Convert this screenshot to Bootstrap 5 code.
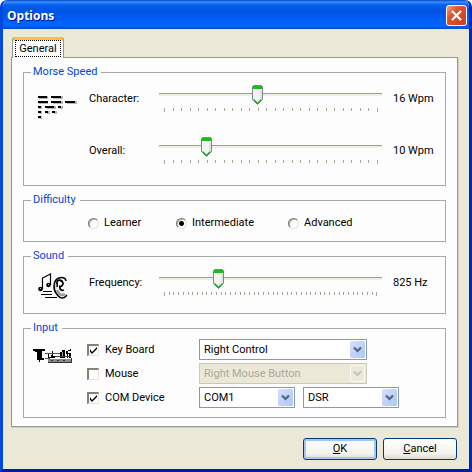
<!DOCTYPE html>
<html lang="en">
<head>
<meta charset="utf-8">
<meta name="viewport" content="width=device-width, initial-scale=1">
<title>Options</title>
<link href="https://cdn.jsdelivr.net/npm/bootstrap@5.3.0/dist/css/bootstrap.min.css" rel="stylesheet">
<style>
  body { background: #fff; color: #000; font: 11px/16px Roboto, "Liberation Sans", sans-serif; }
  .win { background: #ebe8d7; border: solid; border-width: 0 3px 3px; border-color: #0040dc #0028c0 #001ca8 #0048e0; border-radius: 7px 7px 0 0; overflow: hidden; }
  .titlebar { height: 29px; margin: 0 -3px; padding: 2px 5px 0 7px; background: linear-gradient(#0848c8, #3890ff 7%, #0862f0 16%, #0054e3 35%, #005cf4 65%, #0067ff 88%, #0048cc); }
  .titlebar h1 { font: bold 12px/20px "Open Sans", sans-serif; color: #fff; text-shadow: 1px 1px #00138c; }
  .closer { width: 21px; height: 21px; border: 1px solid #fff; border-radius: 3px; background: linear-gradient(135deg, #f0a088, #e25330 35%, #c8401c); }
  .tabs { padding: 8px 8px 0 9px; height: 28px; }
  .tab-general { width: 52px; height: 21px; margin-bottom: -1px; padding: 2px 2px 1px; z-index: 1; border: solid #919b9c; border-width: 0 1px; border-radius: 3px 3px 0 0; background: #fff; box-shadow: inset 0 3px #ffbe3c, inset 0 1px #e5972d; }
  .tab-general span { display: block; height: 17px; line-height: 15px; border: 1px dotted #000; }
  .pane { gap: 7px; margin: 0 11px 0 8px; padding: 7px 11px 8px; border: 1px solid #919b9c; background: #fdfdfd; box-shadow: 1px 1px #d0cebf; }
  .group { border: 1px solid #a8a8a8; }
  .group legend { margin: 0 0 0 7px; padding: 0 4px 0 2px; font-size: 11px; line-height: 14px; color: #0046d5; }
  .group svg { flex: none; }
  .pic { width: 65px; flex: none; padding: 8px 0 0 14px; }
  .speed { padding: 6px 0 21px; }
  .speed .rows { gap: 25px; }
  .sound { padding: 6px 0 13px; }
  .sound .pic { padding-top: 4px; }
  .cap { width: 70px; }
  .val { width: 52px; margin-left: 11px; }
  .slide { min-width: 0; height: 27px; }
  .slide input { appearance: none; -webkit-appearance: none; display: block; width: 100%; height: 20px; margin: 0; background: linear-gradient(#9d9c99 0 1px, #f1efe2 1px 3px) 0 8px / 100% 3px no-repeat; }
  .slide input::-webkit-slider-thumb { -webkit-appearance: none; width: 11px; height: 20px; border: 0; background: url("data:image/svg+xml,%3Csvg xmlns='http://www.w3.org/2000/svg' viewBox='0 0 11 20'%3E%3Cpath d='M1.5.5h8l1 1v13l-5 5-5-5v-13z' fill='%23f3f3ef' stroke='%23778892'/%3E%3Cpath d='M1 1h9v3H1z' fill='%2321b921'/%3E%3Cpath d='M1.5 14.5l4 4 4-4' fill='none' stroke='%2321a52c' stroke-width='1.4'/%3E%3Cpath d='M9 5v9' stroke='%23d2d2ce'/%3E%3C/svg%3E"); }
  .ticks { margin: 3px 4px 0 5px; height: 4px; }
  .ticks i { width: 1px; height: 3px; background: #a7a48f; }
  .ticks i:first-child, .ticks i:last-child { height: 4px; }
  .choices { display: grid; grid-template-columns: 88px 112px auto; padding: 8px 0 10px 64px; }
  .choices input { appearance: none; width: 11px; height: 11px; margin: 0 5px 0 0; border: 1px solid; border-color: #77756a #e6e4d6 #e6e4d6 #77756a; border-radius: 50%; background: #fff; box-shadow: inset 1px 1px #b8b5a2; }
  .choices input:checked { background: radial-gradient(circle, #000 0 2px, #fff 3px); }
  .inputs { padding: 4px 0 9px; }
  .inputs .pic { width: 63px; padding: 9px 0 0 9px; }
  .inputs .rows { gap: 3px; }
  .inputs .line { height: 21px; gap: 8px; margin-right: 46px; }
  .inputs label { width: 104px; }
  .inputs label input { appearance: none; width: 12px; height: 12px; margin: 0 6px 0 0; border: solid; border-width: 2px 1px 1px 2px; border-color: #85826f #e6e4d6 #e6e4d6 #85826f; background: #fff; }
  .inputs label input:checked { background: #fff url("data:image/svg+xml,%3Csvg xmlns='http://www.w3.org/2000/svg' viewBox='0 0 9 9'%3E%3Cpath d='M1 3v3l2 2 5-5V1L3 6z'/%3E%3C/svg%3E") center / 9px 9px; }
  .combo { appearance: none; min-width: 0; height: 21px; padding: 0 20px 0 4px; border: 1px solid #7f9db9; border-radius: 0; color: #000; line-height: 19px; background: #fff url("data:image/svg+xml,%3Csvg xmlns='http://www.w3.org/2000/svg' viewBox='0 0 15 17'%3E%3ClinearGradient id='g' x2='1' y2='1'%3E%3Cstop stop-color='%23d4e0fd'/%3E%3Cstop offset='1' stop-color='%23aec5f8'/%3E%3C/linearGradient%3E%3Crect width='15' height='17' rx='1.5' fill='url(%23g)'/%3E%3Cpath d='M4 6.500l3.500 3.500L11 6.500' fill='none' stroke='%234d6185' stroke-width='2.200'/%3E%3C/svg%3E") right 1px center / 15px 17px no-repeat; }
  .combo:disabled { opacity: 1; color: #aca899; border-color: #cac8bb; background: #ebe8d7 url("data:image/svg+xml,%3Csvg xmlns='http://www.w3.org/2000/svg' viewBox='0 0 15 17'%3E%3Crect x='.5' y='.5' width='14' height='16' rx='1.5' fill='%23ebe9dc' stroke='%23f8f7f2'/%3E%3Cpath d='M4 6.500l3.500 3.500L11 6.500' fill='none' stroke='%23c6c4b6' stroke-width='2.200'/%3E%3C/svg%3E") right 1px center / 15px 17px no-repeat; }
  .actions { gap: 6px; padding: 11px 12px 9px; }
  .push { width: 74px; height: 22px; padding: 0; border: 1px solid #003c74; border-radius: 3px; color: #000; line-height: 18px; background: linear-gradient(#fff, #f3f2ec 75%, #dcd8cb); }
  .push.main { box-shadow: inset 0 0 0 2px #a9c3f2; }
</style>
<script src="https://cdn.jsdelivr.net/npm/bootstrap@5.3.0/dist/js/bootstrap.bundle.min.js"></script>
</head>
<body>
<main class="win">
  <header class="titlebar d-flex align-items-center justify-content-between">
    <h1 class="m-0">Options</h1>
    <button class="closer p-0 d-flex align-items-center justify-content-center" type="button" aria-label="Close">
      <svg width="13" height="13" viewBox="0 0 13 13"><path d="M2 2l9 9M11 2l-9 9" stroke="#fff" stroke-width="2.2"/></svg>
    </button>
  </header>
  <div class="tabs">
    <button class="tab-general position-relative text-center" type="button"><span>General</span></button>
  </div>
  <form class="pane d-flex flex-column">
    <fieldset class="group">
      <legend class="float-none w-auto">Morse Speed</legend>
      <div class="speed d-flex">
        <div class="pic">
          <svg class="d-block" width="40" height="28" viewBox="-1 0 40 28" shape-rendering="crispEdges">
            <path d="M0 5h9M14 5h10M0 10h9M14 10h10M28 10h10M0 15h3M8 15h9M21 15h3M0 20h3M8 20h3M15 20h3M0 25h3" transform="translate(0 -.5)" stroke="#b5b5b5" stroke-width="3"/>
            <path d="M-1 4h9M12 4h10M-1 9h10M12 9h10M26 9h10M-1 14h3M6 14h9M19 14h3M-1 19h3M6 19h3M13 19h3M-1 24h3" stroke="#000" stroke-width="2"/>
          </svg>
        </div>
        <div class="rows d-flex flex-column flex-grow-1">
          <div class="d-flex align-items-center">
            <label class="cap" for="character">Character:</label>
            <div class="slide flex-grow-1"><input id="character" type="range" min="5" max="30" value="16"><div class="ticks d-flex justify-content-between" data-count="26"></div></div>
            <output class="val" for="character">16 Wpm</output>
          </div>
          <div class="d-flex align-items-center">
            <label class="cap" for="overall">Overall:</label>
            <div class="slide flex-grow-1"><input id="overall" type="range" min="5" max="30" value="10"><div class="ticks d-flex justify-content-between" data-count="26"></div></div>
            <output class="val" for="overall">10 Wpm</output>
          </div>
        </div>
      </div>
    </fieldset>
    <fieldset class="group">
      <legend class="float-none w-auto">Difficulty</legend>
      <div class="choices">
        <label class="d-flex align-items-center"><input type="radio" name="level">Learner</label>
        <label class="d-flex align-items-center"><input type="radio" name="level" checked>Intermediate</label>
        <label class="d-flex align-items-center"><input type="radio" name="level">Advanced</label>
      </div>
    </fieldset>
    <fieldset class="group">
      <legend class="float-none w-auto">Sound</legend>
      <div class="sound d-flex align-items-start">
        <div class="pic">
          <svg class="d-block" width="32" height="27" viewBox="1 0 32 27" fill="none" stroke="#000">
            <path d="M5.500 16V5l8-4v11" stroke-width="1.200"/>
            <circle cx="3.500" cy="16" r="2.300" fill="#000" stroke="none"/><circle cx="11.500" cy="12" r="2.300" fill="#000" stroke="none"/>
            <path d="M3 15.500h1M11 11.500h1" stroke="#bbb"/>
            <path d="M6 18.500h9M4 21.500h11M8 24.500h12"/>
            <path d="M19 20c-3-4-3-13 3-15 4-1 7 0 7 3M19 20c2 3 4 5 6 5 3 0 4-2 5-3" stroke-width="1.500"/>
            <path d="M20 17c2 5 5 6 8 4" stroke="#999" stroke-width="2.500"/>
            <path d="M20 14V9c1-3 5-2 6 1 0 3-2 4-4 3M23 13c-1 3 1 5 4 4" stroke-width="1.800"/>
            <path d="M19 11v5" stroke="#aaa"/>
          </svg>
        </div>
        <div class="d-flex align-items-center flex-grow-1">
          <label class="cap" for="frequency">Frequency:</label>
          <div class="slide flex-grow-1"><input id="frequency" type="range" min="250" max="2500" step="25" value="825"><div class="ticks d-flex justify-content-between" data-count="46"></div></div>
          <output class="val" for="frequency">825 Hz</output>
        </div>
      </div>
    </fieldset>
    <fieldset class="group">
      <legend class="float-none w-auto">Input</legend>
      <div class="inputs d-flex">
        <div class="pic">
          <svg class="d-block" width="40" height="16" viewBox="0 0 40 16" shape-rendering="crispEdges">
            <path d="M0 1h12v2H9v7h2v2H7v2H6v-2H4V4H2V3H0zM15 5h1v4h-1zM19 3h1v5h2v2h-7V9h3V7h1z"/>
            <path d="M12 5.500h15M12 10h5" stroke="#555"/>
            <path d="M15 11h24v4H15z" fill="#858b8c"/><path d="M15 14h24v1H15zM38 10h1v5h-1z" fill="#333"/>
            <path d="M18 12h2v1h-2zM24 12h2v1h-2zM30 12h2v1h-2z" fill="#333"/>
            <path d="M27 4h2V2h3v8h-5zM33 3h2V2h2V1h1v2h-3v2h3v1h-3v4h-1V6h-1zM36 6h2v4h-2z"/>
            <path d="M29 4h1v5h-1z" fill="#aaa"/><path d="M22 8h16v1H22z" fill="#444"/>
          </svg>
        </div>
        <div class="rows d-flex flex-column flex-grow-1">
          <div class="line d-flex align-items-center">
            <label class="d-flex align-items-center"><input type="checkbox" checked>Key Board</label>
            <select class="combo col" aria-label="Key"><option>Right Control</option></select><span class="me-4"></span>
          </div>
          <div class="line d-flex align-items-center">
            <label class="d-flex align-items-center"><input type="checkbox">Mouse</label>
            <select class="combo col" aria-label="Mouse button" disabled><option>Right Mouse Button</option></select><span class="me-4"></span>
          </div>
          <div class="line d-flex align-items-center">
            <label class="d-flex align-items-center"><input type="checkbox" checked>COM Device</label>
            <select class="combo col" aria-label="Port"><option>COM1</option></select>
            <select class="combo col" aria-label="Signal"><option>DSR</option></select>
          </div>
        </div>
      </div>
    </fieldset>
  </form>
  <div class="actions d-flex justify-content-end">
    <button class="push main" type="button"><u>O</u>K</button>
    <button class="push" type="button"><u>C</u>ancel</button>
  </div>
</main>
<script>
  document.querySelectorAll('.ticks').forEach(function (scale) {
    for (var n = 0; n < Number(scale.dataset.count); n++) scale.append(document.createElement('i'));
  });
</script>
</body>
</html>
